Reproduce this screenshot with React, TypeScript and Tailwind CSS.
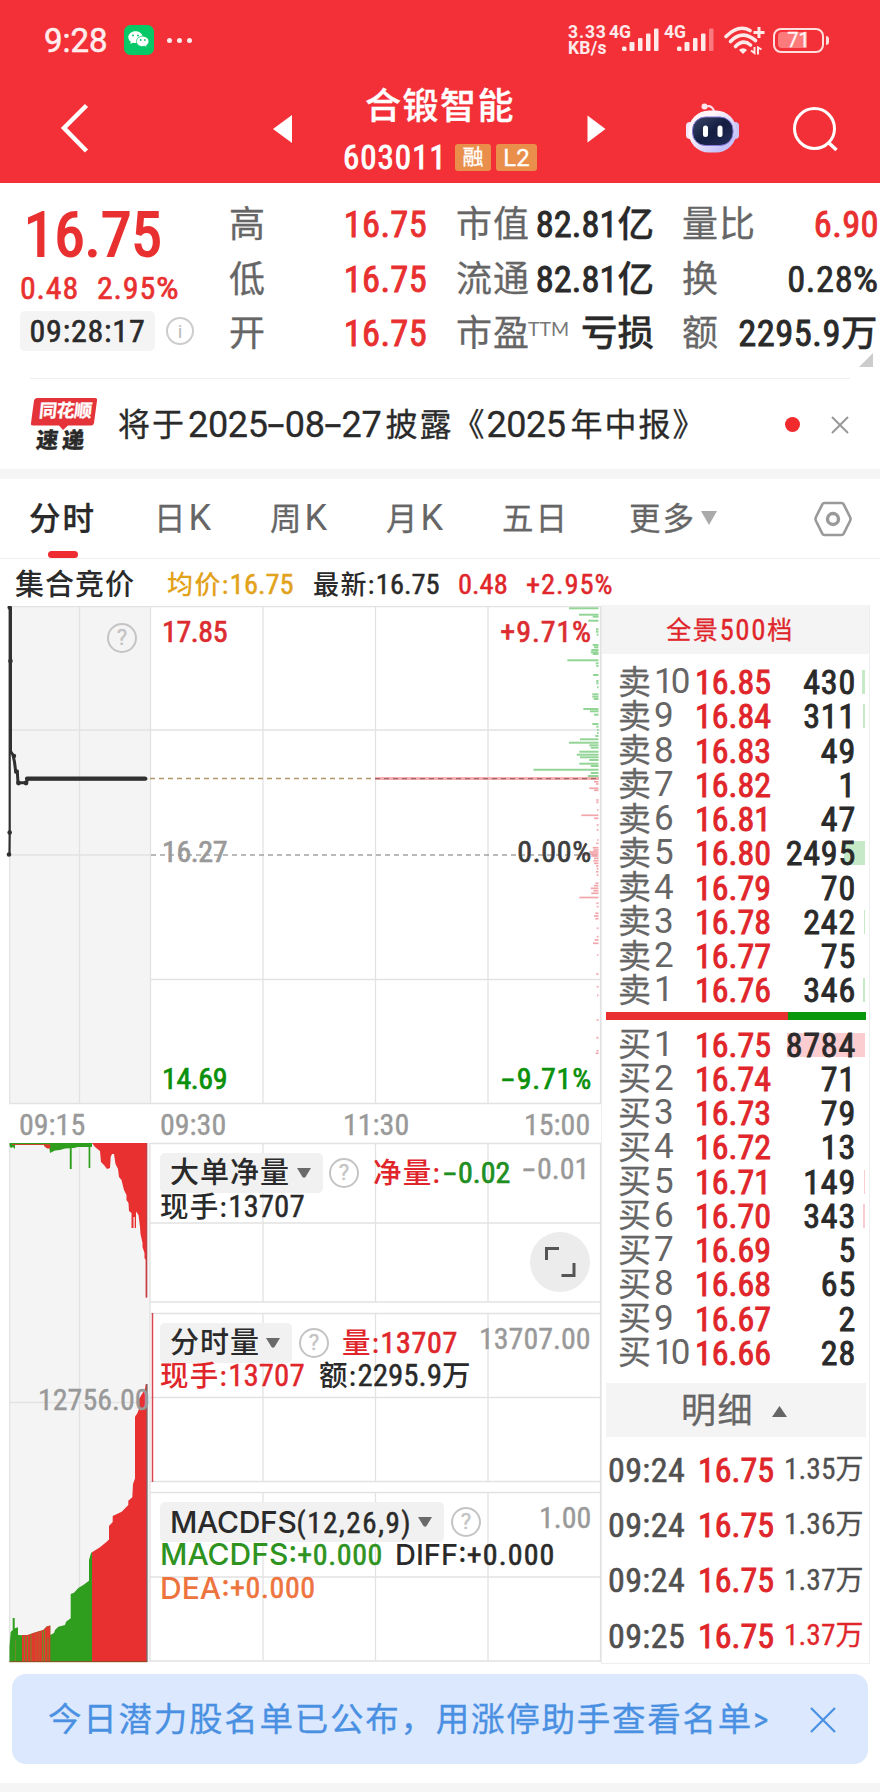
import type { ReactNode } from "react";

const GREEN_DEPTH: [number, number][] = [
  [608.3, 569], [614.7, 579], [616.7, 592.7], [620.7, 588.3], [629.3, 596], [631.7, 596], [634.7, 596.7], [645, 592.7],
  [647.3, 594], [650, 591.3], [652.3, 590.7], [654, 592.7], [660.3, 567.3], [663.3, 595.7], [666, 596.3], [675, 593],
  [681, 596.3], [683.3, 596.3], [687.3, 597], [694.3, 592.3], [696.7, 592.3], [699, 593.7], [709, 583.3], [711.3, 590],
  [714.7, 594], [724, 592.3], [726.7, 596.3], [730, 597], [733, 597], [736, 595.3], [739.3, 580], [742.7, 569],
  [745.3, 589.3], [747.7, 590.7], [751.7, 579.3], [754.7, 576.7], [757.3, 580], [760, 589.3], [763.7, 579.3],
  [766, 590.7], [769.7, 533.5], [773, 590.7], [776, 587.7],
];
const RED_DEPTH: [number, number][] = [
  [781.7, 594], [784, 596], [788.3, 589.3], [790.3, 594], [800, 596.3], [802.3, 596.3], [810, 597], [815.3, 581.3],
  [818.3, 594], [825, 596.7], [830, 596.7], [840, 597], [843.3, 596.3], [847.7, 592.7], [850, 593.3], [852, 589.3],
  [854, 581.3], [856, 591.3], [858.3, 594], [860.7, 593.3], [863.3, 594], [866, 596], [868.7, 596.7], [871.7, 596],
  [875, 596.7], [883.3, 595.3], [885.7, 594], [888.3, 590.7], [890.7, 593.3], [893.3, 591.3], [897.5, 579.3],
  [903.3, 596.3], [906.7, 596.7], [913.3, 595.3], [916, 594], [918.7, 595.3], [928.3, 596.7], [936.7, 596.7],
  [940, 594.7], [943.3, 593], [955, 597], [974, 596.3], [986.7, 596.7], [995.3, 597], [1020, 596.7], [1037.7, 596.3],
  [1050.7, 596.7], [1053.3, 595.7],
];

type Level = { label: string; price: string; volume: string; bar: number };
const SELLS: Level[] = [
  { label: "10", price: "16.85", volume: "430", bar: 3 },
  { label: "9", price: "16.84", volume: "311", bar: 2 },
  { label: "8", price: "16.83", volume: "49", bar: 0 },
  { label: "7", price: "16.82", volume: "1", bar: 0 },
  { label: "6", price: "16.81", volume: "47", bar: 0 },
  { label: "5", price: "16.80", volume: "2495", bar: 21 },
  { label: "4", price: "16.79", volume: "70", bar: 0 },
  { label: "3", price: "16.78", volume: "242", bar: 1 },
  { label: "2", price: "16.77", volume: "75", bar: 0 },
  { label: "1", price: "16.76", volume: "346", bar: 2 },
];
const BUYS: Level[] = [
  { label: "1", price: "16.75", volume: "8784", bar: 78 },
  { label: "2", price: "16.74", volume: "71", bar: 0 },
  { label: "3", price: "16.73", volume: "79", bar: 0 },
  { label: "4", price: "16.72", volume: "13", bar: 0 },
  { label: "5", price: "16.71", volume: "149", bar: 1 },
  { label: "6", price: "16.70", volume: "343", bar: 2 },
  { label: "7", price: "16.69", volume: "5", bar: 0 },
  { label: "8", price: "16.68", volume: "65", bar: 0 },
  { label: "9", price: "16.67", volume: "2", bar: 0 },
  { label: "10", price: "16.66", volume: "28", bar: 0 },
];
const TRADES = [
  { time: "09:24", volume: "1.35", up: false },
  { time: "09:24", volume: "1.36", up: false },
  { time: "09:24", volume: "1.37", up: false },
  { time: "09:25", volume: "1.37", up: true },
];

const STRONG = "[-webkit-text-stroke:0.9px]";

function Dash({ className = "w-[15px]" }: { className?: string }) {
  return (
    <span className={`inline-flex justify-center tracking-normal ${className}`}>
      <span className="inline-block scale-x-[1.7] font-normal">-</span>
    </span>
  );
}

function Signal({ dim = false }: { dim?: boolean }) {
  return (
    <svg className="h-[24px] w-[37px]" viewBox="0 0 37 24" fill="#ffeaea">
      <rect x="0" y="18.5" width="4.5" height="4.5" rx="1.5" />
      <rect x="7.5" y="14" width="5" height="9" rx="1" />
      <rect x="16" y="10" width="4.5" height="13" rx="1" />
      <rect x="24" y="5.5" width="4.5" height="17.5" rx="1" />
      <rect x="32" y="0.5" width="4.5" height="22.5" rx="1" opacity={dim ? 0.4 : 1} />
    </svg>
  );
}

function StatusBar() {
  return (
    <div className="flex h-[80px] items-center leading-none text-white/90">
      <span className="ml-[44px] w-[80px] font-['Roboto'] text-[33px] [-webkit-text-stroke:0.500px]">9:28</span>
      <svg className="h-[30px] w-[30px]" viewBox="0 0 30 30">
        <rect width="30" height="30" rx="6.5" fill="#07c866" />
        <path d="M11.5 6.2c-4 0-7.200 2.700-7.200 6 0 1.900 1 3.500 2.600 4.600l-.7 2.200 2.600-1.300c.9.300 1.800.400 2.700.400 4 0 7.200-2.600 7.200-5.900s-3.200-6-7.200-6z" fill="#fff" />
        <circle cx="9" cy="10.500" r="1" fill="#07c866" />
        <circle cx="14" cy="10.500" r="1" fill="#07c866" />
        <path d="M18.700 11.200c-3.500 0-6.200 2.300-6.200 5.200s2.700 5.200 6.200 5.200c.7 0 1.500-.1 2.100-.3l2.200 1.200-.6-2c1.500-1 2.500-2.400 2.500-4.100 0-2.900-2.800-5.200-6.200-5.200z" fill="#fff" stroke="#07c866" strokeWidth="0.800" />
        <circle cx="16.700" cy="15" r="0.900" fill="#07c866" />
        <circle cx="20.900" cy="15" r="0.900" fill="#07c866" />
      </svg>
      <div className="ml-[13px] flex gap-[5px]">
        <i className="size-[5px] rounded-full bg-white/90" />
        <i className="size-[5px] rounded-full bg-white/90" />
        <i className="size-[5px] rounded-full bg-white/90" />
      </div>
      <div className="ml-[376px] flex w-[41px] flex-col font-['Roboto'] text-[17.500px] leading-[16px] font-bold [-webkit-text-stroke:0px]">
        <span className="tracking-[0.900px]">3.33</span>
        <span className="tracking-[0.200px]">KB/s</span>
      </div>
      <span className="w-[13px] pb-[14px] font-['Roboto'] text-[17.500px] font-bold [-webkit-text-stroke:0px]">4G</span>
      <Signal />
      <span className="ml-[5px] w-[13px] pb-[14px] font-['Roboto'] text-[17.500px] font-bold [-webkit-text-stroke:0px]">4G</span>
      <Signal dim />
      <svg className="ml-[10px] h-[30px] w-[42px]" viewBox="0 0 42 30" fill="none" stroke="#ffeaea">
        <path d="M2 11.500Q14.500 -1 26 5.500" strokeWidth="3.600" strokeLinecap="round" />
        <path d="M6.500 16.500Q18 4.500 31.500 15.500" strokeWidth="3.600" strokeLinecap="round" />
        <path d="M11.500 21.500Q19 13.500 26.500 20" strokeWidth="3.600" strokeLinecap="round" />
        <path d="M15 25a5.500 5.500 0 0 1 8 0l-4 4z" fill="#ffeaea" stroke="none" />
        <path d="M35 2v11M29.500 7.500h11" strokeWidth="3" />
        <path d="M27 25.500l3.500 2.500v-6M37.500 24.500l-3.500-2v7" strokeWidth="2" />
      </svg>
      <div className="ml-[7px] flex h-[25px] w-[51px] items-center justify-center rounded-[8px] border-[2.500px] border-[#ffdede] p-[2.500px]">
        <div className="flex h-full w-full items-center justify-center rounded-[4px] bg-linear-to-r from-[#fb7a7c] from-70% to-transparent to-70% font-['Roboto'] text-[20px] leading-none">71</div>
      </div>
      <div className="ml-[2px] h-[9px] w-[3px] rounded-r bg-[#ffdede]" />
    </div>
  );
}

function Robot() {
  return (
    <svg className="h-[50px] w-[56px]" viewBox="0 0 56 50">
      <defs>
        <linearGradient id="shell" x1="0" y1="0" x2="1" y2="1">
          <stop offset="0.300" stopColor="#fff5fb" />
          <stop offset="0.800" stopColor="#c5c2fa" />
        </linearGradient>
        <linearGradient id="face" x1="0" y1="0" x2="1" y2="1">
          <stop offset="0" stopColor="#3a4567" />
          <stop offset="0.500" stopColor="#141e42" />
          <stop offset="1" stopColor="#222c58" />
        </linearGradient>
      </defs>
      <path d="M21 3.500q6-1.500 8 4.500" fill="none" stroke="#fbd9e6" strokeWidth="2.200" />
      <circle cx="19.500" cy="3.500" r="3" fill="#ffe6ee" />
      <rect x="1" y="19" width="8" height="17" rx="4" fill="#f3e6fb" />
      <rect x="46" y="19" width="8" height="17" rx="4" fill="#c9c4f6" />
      <rect x="3.500" y="7.500" width="48" height="42" rx="20.500" fill="url(#shell)" />
      <rect x="7.500" y="14" width="40.500" height="28.500" rx="13" fill="url(#face)" stroke="#8578d8" strokeWidth="1" />
      <rect x="18" y="22.500" width="5" height="11.500" rx="2.500" fill="#fff" />
      <rect x="32.500" y="22.500" width="5" height="11.500" rx="2.500" fill="#fff" />
    </svg>
  );
}

function TitleBar() {
  return (
    <div className="flex h-[103px]">
      <svg className="mt-[23px] ml-[59px] h-[50px] w-[30px]" viewBox="0 0 30 50" fill="none" stroke="#fff" strokeWidth="4.500">
        <path d="M27.500 2.500L5 25L27.500 48" />
      </svg>
      <svg className="mt-[35px] ml-[184px] h-[28px] w-[20px]" viewBox="0 0 20 28" fill="#fff">
        <path d="M0 14L19 0V28z" />
      </svg>
      <div className="ml-[50px] w-[202px] leading-none">
        <div className="mt-[9px] ml-[22px] text-[36px] font-medium tracking-[1.500px] text-white">合锻智能</div>
        <div className="mt-[16px] flex items-center">
          <span className={`w-[112px] text-[33px] tracking-[1px] text-white ${STRONG}`}>603011</span>
          <span className="flex h-[27px] w-[36px] items-center justify-center rounded-[3px] bg-[#e98f4b] text-[21px] text-white">融</span>
          <span className="ml-[5px] flex h-[27px] w-[41px] items-center justify-center rounded-[3px] bg-[#e98f4b] font-['Roboto'] text-[24px] text-white">L2</span>
        </div>
      </div>
      <svg className="mt-[35px] ml-[42px] h-[28px] w-[19px]" viewBox="0 0 19 28" fill="#fff">
        <path d="M18.500 14L0.500 0.500V27.500z" />
      </svg>
      <div className="mt-[23px] ml-[79px]">
        <Robot />
      </div>
      <svg className="mt-[26px] ml-[52px] h-[46px] w-[46px]" viewBox="0 0 46 46" fill="none" stroke="#fff">
        <circle cx="21.500" cy="22.500" r="20" strokeWidth="3" />
        <path d="M35.500 36.500L43.500 44" strokeWidth="3.500" />
      </svg>
    </div>
  );
}

function QuoteRow({ children }: { children: ReactNode }) {
  return <div className="flex h-[54.500px] items-center text-[36.500px] leading-none whitespace-nowrap">{children}</div>;
}

function Quote() {
  const label = "text-[36px] text-[#666] tracking-[1px]";
  const red = `w-[121px] text-right tracking-[0.300px] text-[#e93030] ${STRONG}`;
  const dark = `text-right text-[#2a2a2a] ${STRONG}`;
  const unit = "font-medium [-webkit-text-stroke:0.300px]";
  return (
    <div className="flex h-[195px]">
      <div className="w-[229px] leading-none text-[#e93030]">
        <div className="mt-[21px] ml-[24px] text-[62px] tracking-[-0.300px] [-webkit-text-stroke:1.800px]">16.75</div>
        <div className="mt-[6px] ml-[20px] flex text-[32px] tracking-[0.800px] [-webkit-text-stroke:0.600px]">
          <span className="w-[77px]">0.48</span>
          <span>2.95<span className="inline-block origin-left scale-x-[1.120]">%</span></span>
        </div>
        <div className="mt-[7px] flex items-center">
          <span className="ml-[20px] flex h-[40px] w-[135px] items-center justify-center rounded-[5px] bg-[#f4f4f4] text-[32px] tracking-[0.800px] text-[#2a2a2a] [-webkit-text-stroke:0.600px]">09:28:17</span>
          <span className="ml-[11px] flex size-[28px] items-center justify-center rounded-full border-2 border-[#ccc] font-['Roboto'] text-[19px] text-[#bbb] [-webkit-text-stroke:0px]">i</span>
        </div>
      </div>
      <div className="mt-[15px] w-[651px]">
        <QuoteRow>
          <span className={`w-[77px] ${label}`}>高</span><span className={red}>16.75</span>
          <span className={`ml-[29px] w-[78px] ${label}`}>市值</span>
          <span className={`w-[120px] ${dark}`}>82.81<span className={unit}>亿</span></span>
          <span className={`ml-[28px] ${label}`}>量比</span>
          <span className={`flex-1 pr-[1px] text-right tracking-[0.400px] text-[#e93030] ${STRONG}`}>6.90</span>
        </QuoteRow>
        <QuoteRow>
          <span className={`w-[77px] ${label}`}>低</span><span className={red}>16.75</span>
          <span className={`ml-[29px] w-[78px] ${label}`}>流通</span>
          <span className={`w-[120px] ${dark}`}>82.81<span className={unit}>亿</span></span>
          <span className={`ml-[28px] ${label}`}>换</span>
          <span className="flex-1 pr-[1px] text-right tracking-[0.600px] text-[#2a2a2a] [-webkit-text-stroke:0.700px]">0.28<span className="inline-block origin-right scale-x-[1.100] pl-[2px]">%</span></span>
        </QuoteRow>
        <QuoteRow>
          <span className={`w-[77px] ${label}`}>开</span><span className={red}>16.75</span>
          <span className={`ml-[29px] w-[72px] ${label}`}>市盈</span>
          <span className="w-[40px] pb-[12px] font-['Lato'] text-[19.500px] text-[#777] [-webkit-text-stroke:0px]">TTM</span>
          <span className="w-[86px] text-right font-medium text-[#2a2a2a]">亏损</span>
          <span className={`ml-[28px] ${label}`}>额</span>
          <span className={`flex-1 pr-[2px] tracking-[0.500px] ${dark}`}>2295.9<span className={unit}>万</span></span>
        </QuoteRow>
        <svg className="-mt-[9px] ml-[630px] h-[14px] w-[14px]" viewBox="0 0 14 14" fill="#ccc">
          <path d="M14 0V14H0z" />
        </svg>
      </div>
    </div>
  );
}

function News() {
  return (
    <div className="ml-[30px] flex h-[91px] w-[820px] items-center border-t-[1.500px] border-[#eee] pt-[1px] leading-none whitespace-nowrap text-[#2a2a2a]">
      <div className="relative h-[56px] w-[68px] shrink-0">
        <svg className="absolute inset-0 h-[56px] w-[68px]" viewBox="0 0 68 56" fill="#e5333a">
          <path d="M7 1H65q2.500 0 2 2.500L64 26q-.5 2.500-3 2.500H38l-5 4.500-4-4.500H3q-2.500 0-2-2.500L4 3.500Q4.500 1 7 1z" />
        </svg>
        <div className="relative flex -skew-x-6 flex-col items-center">
          <span className="mt-[5px] text-[18px] font-bold tracking-[-0.500px] text-white">同花顺</span>
          <span className="mt-[10px] text-[22px] font-black tracking-[4px]">速递</span>
        </div>
      </div>
      <div className="ml-[20px] flex w-[630px] shrink-0 items-center text-[32px] tracking-[2px]">
        <span className="w-[70px]">将于</span>
        <span className="font-['Roboto'] text-[36px] tracking-[-0.300px]">
          2025<Dash className="w-[17px]" />08<Dash className="w-[17px]" />27
        </span>
        <span className="ml-[4px] w-[67px]">披露</span>
        <span className="w-[34px]">《</span>
        <span className="font-['Roboto'] text-[36px] tracking-[-0.500px]">2025</span>
        <span className="ml-[5px]">年中报》</span>
      </div>
      <span className="ml-[37px] size-[15px] shrink-0 rounded-full bg-[#f02a2d]" />
      <svg className="ml-[31px] h-[18px] w-[18px] shrink-0" viewBox="0 0 18 18" stroke="#999" strokeWidth="2">
        <path d="M1 1L17 17M17 1L1 17" />
      </svg>
    </div>
  );
}

function TabK({ children }: { children: string }) {
  return (
    <span className="mt-[25px] w-[116px]">
      {children}
      <span className="ml-[1px] font-['Roboto'] text-[36px] leading-[0] [-webkit-text-stroke:0px]">K</span>
    </span>
  );
}

function Tabs() {
  return (
    <div className="flex h-[80px] border-b-[1.500px] border-[#eee] text-[31.500px] leading-none tracking-[2px] whitespace-nowrap text-[#666]">
      <div className="ml-[30px] flex w-[65px] flex-col items-center">
        <span className="mt-[25px] font-medium text-[#2a2a2a]">分时</span>
        <i className="mt-[15px] h-[7px] w-[30px] rounded-full bg-[#ed2b30]" />
      </div>
      <span className="w-[59px]" />
      <TabK>日</TabK>
      <TabK>周</TabK>
      <TabK>月</TabK>
      <span className="mt-[25px] w-[127px]">五日</span>
      <span className="mt-[25px] w-[72px]">更多</span>
      <svg className="mt-[32px] h-[14px] w-[16px]" viewBox="0 0 16 14" fill="#aaa"><path d="M0 0H16L8 14z" /></svg>
      <svg className="mt-[22px] ml-[97px] h-[36px] w-[38px]" viewBox="0 0 38 36" fill="none" stroke="#999">
        <path d="M10.500 2H27.500Q29 2 29.700 3.300L36 16Q37 18 36 20L29.700 32.700Q29 34 27.500 34H10.500Q9 34 8.300 32.700L2 20Q1 18 2 16L8.300 3.300Q9 2 10.500 2z" strokeWidth="2.600" />
        <circle cx="19" cy="18" r="5.500" strokeWidth="3.400" />
      </svg>
    </div>
  );
}

function InfoLine() {
  return (
    <div className="flex h-[47px] items-center pt-[5px] text-[28.500px] leading-none whitespace-nowrap [-webkit-text-stroke:0.500px]">
      <span className="ml-[15px] w-[152px] text-[29px] font-medium tracking-[1px] text-[#2a2a2a] [-webkit-text-stroke:0px]">集合竞价</span>
      <span className="w-[146px] text-[#e2a21b]"><span className="text-[26px] font-medium tracking-[1.400px] [-webkit-text-stroke:0px]">均价:</span>16.75</span>
      <span className="w-[145px] text-[#2a2a2a]"><span className="text-[26px] font-medium tracking-[1.400px] [-webkit-text-stroke:0px]">最新:</span>16.75</span>
      <span className="w-[68px] text-[#e0262b]">0.48</span>
      <span className="tracking-[0.900px] text-[#e0262b]">+2.95%</span>
    </div>
  );
}

function ChartCanvas() {
  return (
    <svg className="absolute inset-0 h-[1058px] w-[602px]" viewBox="0 606 602 1058" fill="none">
      <rect x="9" y="606" width="141" height="498" fill="#f4f4f4" />
      <rect x="9" y="1143" width="141" height="519" fill="#f4f4f4" />
      <g stroke="#e2e2e2" strokeWidth="1.300">
        <path d="M9 606.500H601M9 730H601M9 855H150M151 979.500H601M9 1103.500H601" />
        <path d="M9.700 606V1103M79.500 606V1103M150.500 606V1103M263 606V1103M375.500 606V1103M488 606V1103M600.500 606V1103" />
        <path d="M150 1143.500H601M150 1223H601M150 1302H601M150 1313.500H601M150 1397.500H601M150 1481.500H601M150 1492.500H601M150 1577H601M150 1661H601M9 1402.500H150" />
        <path d="M9.700 1143V1662M79.500 1143V1662M150 1143V1662M263 1143V1302M375.500 1143V1302M488 1143V1302M600.500 1143V1662M263 1313V1481M375.500 1313V1481M488 1313V1481M263 1492V1661M375.500 1492V1661M488 1492V1661" />
      </g>
      <path d="M375 778.600H599" stroke="#f5aeb0" strokeWidth="3" />
      <path d="M150 778.600H375" stroke="#b09768" strokeWidth="1.500" strokeDasharray="5 4" />
      <path d="M375 778.600H600" stroke="#a06a6a" strokeWidth="1.200" strokeDasharray="5 4" />
      <path d="M151 855H600" stroke="#a3a3a3" strokeWidth="1.500" strokeDasharray="5 4" />
      {GREEN_DEPTH.map(([y, x]) => <path key={y} d={`M${x} ${y}H598.500`} stroke="#93d596" strokeWidth="2" />)}
      {RED_DEPTH.map(([y, x]) => <path key={y} d={`M${x} ${y}H598.500`} stroke="#f2a5ab" strokeWidth="1.700" />)}

      <path d="M9.700 607V832L9.500 854" stroke="#303030" strokeWidth="2.200" />
      <path d="M10.500 607V753" stroke="#303030" strokeWidth="3" />
      <path d="M11 752L13 755L14.500 762L15.700 771.500H17.300L18 782.700H26.500L27.500 778.700H146" stroke="#303030" strokeWidth="3" strokeLinecap="round" strokeLinejoin="round" />
      <path d="M27 778.700H145" stroke="#303030" strokeWidth="4.200" strokeLinecap="round" />
      <g fill="#303030">
        <circle cx="9.700" cy="607.500" r="2.200" /><circle cx="10.500" cy="661" r="2.300" /><circle cx="14" cy="756" r="2.200" />
        <circle cx="16.500" cy="771.700" r="2.400" /><circle cx="18.500" cy="783" r="2.400" /><circle cx="26" cy="783" r="2.400" />
        <circle cx="9.700" cy="832.500" r="2.300" /><circle cx="9" cy="854.500" r="2.300" />
      </g>

      <path d="M9.500 1143H92V1147H78L74 1148L65 1148.500L60 1150L55 1150.500L50 1153L49 1145H15V1149L13 1147L11 1148L9.500 1146zM69.800 1144H71.700V1169H69.800zM88.600 1144H90.300V1168H88.600z" fill="#2f9e1e" />
      <path d="M12 1144.500H50M44 1145.500h6v2.500h-3z" stroke="#c9452c" strokeWidth="1" fill="#e83030" />
      <path d="M92 1143H147V1297.500H145.600V1260L144.500 1258V1253L142.500 1247V1243L140.500 1234L140 1227L138.500 1215L136 1211.500V1228H134.700V1217H133.500V1228H131.500V1213L129 1211L128.500 1203L126.500 1200V1195L124 1190L121.500 1180L119 1177L118 1169L115.500 1164L114 1154H112L110.700 1157L110 1168L107 1169L104 1165L101 1162L100 1151L95 1147z" fill="#e83030" />
      <path d="M146.700 1143V1297.500" stroke="#b8434d" strokeWidth="1.200" />

      <path d="M9.500 1662V1646.700L10.700 1632L12.700 1630V1618H14.700V1628.300L18 1627.300V1635L27.300 1635.500L33.300 1633L43.300 1630L46.700 1626.500L50.300 1625.500V1635L54 1633L55 1630L58.300 1626.700L65 1625L66 1621.700L70.700 1618.300V1594L74 1592.700L78.300 1588L83.300 1585L89 1580.700V1560L91 1553L92 1552.300V1662z" fill="#2f9e1e" />
      <path d="M22 1662V1635H27.500L33.300 1633L43.300 1630L46.700 1626.500L50.300 1625.500V1662z" fill="#e03a2e" />
      <path d="M24.500 1635.500V1662M27.500 1636V1662M31 1634V1662M42.500 1631V1662M44.500 1630V1662M48 1638V1662M15.500 1640V1662" stroke="#6f8a26" strokeWidth="1" />
      <path d="M36 1632V1662M39 1632V1662" stroke="#c05a2e" strokeWidth="1" />
      <path d="M92 1662V1552.300L100 1547.300L106.700 1541.700L109 1539.500V1526L112.700 1522V1516L121.700 1511.700L128.300 1505V1500.700L132.300 1497.300L133 1484L135 1478.500V1416.700L137.300 1413.300L139.300 1408.300V1398.500L143.300 1391.700L145 1389L145.700 1384H147V1662z" fill="#e83030" />
      <path d="M147 1384V1662" stroke="#76696f" strokeWidth="1.300" />
      <path d="M9.500 1661.700H147" stroke="#8c4a20" strokeWidth="1" />
      <path d="M152.500 1313V1482" stroke="#d94550" strokeWidth="1.500" />
    </svg>
  );
}

function Help({ className = "" }: { className?: string }) {
  return (
    <span className={`flex size-[30px] shrink-0 items-center justify-center rounded-full border-2 border-[#c4c4c4] font-['Roboto'] text-[22px] leading-none text-[#c4c4c4] ${className}`}>?</span>
  );
}

function Selector({ children, className }: { children: ReactNode; className: string }) {
  return (
    <span className={`flex h-[40px] shrink-0 items-center justify-between rounded-[5px] bg-[#f1f1f1] pr-[12px] pl-[10px] text-[29px] font-medium text-[#2a2a2a] [-webkit-text-stroke:0px] ${className}`}>
      {children}
      <svg className="h-[10px] w-[14px] shrink-0" viewBox="0 0 14 10" fill="#6a6a6a"><path d="M0 0H14L8.500 9Q7 10.500 5.500 9z" /></svg>
    </span>
  );
}

function Charts() {
  const cjk = "text-[28.500px] font-medium tracking-[1.300px] [-webkit-text-stroke:0px]";
  const latin = "font-['Inter'] font-medium [-webkit-text-stroke:0px]";
  return (
    <div className="relative h-[1058px] w-[601px] text-[30px] leading-none whitespace-nowrap [-webkit-text-stroke:0.400px]">
      <ChartCanvas />
      <div className="relative flex h-[497px]">
        <Help className="mt-[17px] ml-[107px]" />
        <div className="ml-[25px] flex w-[431px] flex-col [-webkit-text-stroke:0.700px]">
          <div className="mt-[11px] flex justify-between text-[#dc2c30]"><span className="tracking-[-0.400px]">17.85</span><span className="pr-[1px] tracking-[0.900px]">+9.71%</span></div>
          <div className="mt-[190px] flex justify-between text-[#999]"><span className="tracking-[-0.400px]">16.27</span><span className="pr-[1px] tracking-[0.700px] text-[#3d3d3d]">0.00%</span></div>
          <div className="mt-[197px] flex justify-between text-[#0a900a]"><span className="tracking-[-0.400px]">14.69</span><span className="pr-[1px] tracking-[0.800px]"><Dash className="w-[18px]" />9.71%</span></div>
        </div>
      </div>
      <div className="relative flex h-[40px] items-center pt-[3px] text-[#999]">
        <span className="ml-[19px] w-[141px]">09:15</span>
        <span className="w-[183px]">09:30</span>
        <span className="w-[181px]">11:30</span>
        <span>15:00</span>
      </div>

      <div className="relative ml-[160px] h-[170px]">
        <div className="flex items-center pt-[10px]">
          <Selector className="w-[163px] tracking-[1px]">大单净量</Selector>
          <Help className="ml-[6px]" />
          <span className="ml-[14px] w-[69px] text-[#e0262b]"><span className={cjk}>净量:</span></span>
          <span className="w-[79px] text-[#1f8f1f] [-webkit-text-stroke:0.700px]"><Dash className="w-[16px]" />0.02</span>
          <span className="pb-[9px] text-[#999]"><Dash className="w-[16px]" />0.01</span>
        </div>
        <div className="-mt-[2px] text-[31px] text-[#2a2a2a]"><span className={cjk}>现手:</span>13707</div>
        <span className="mt-[9px] ml-[370px] flex size-[60px] items-center justify-center rounded-full bg-[#ececec]">
          <svg className="h-[32px] w-[32px]" viewBox="0 0 32 32" fill="none" stroke="#555" strokeWidth="3">
            <path d="M2.500 14V2.500H15M17.500 29.500H30V17" />
          </svg>
        </span>
      </div>

      <div className="relative ml-[160px] h-[179px]">
        <div className="flex items-center pt-[10px]">
          <Selector className="w-[132px] tracking-[1px]">分时量</Selector>
          <Help className="ml-[7px]" />
          <span className="ml-[13px] w-[137px] text-[#e0262b] [-webkit-text-stroke:0.700px]"><span className={cjk}>量:</span><span className="tracking-[0.700px]">13707</span></span>
          <span className="pb-[9px] text-[#999]">13707.00</span>
        </div>
        <div className="-mt-[3px] flex text-[31px]">
          <span className="w-[159px] text-[#e0262b]"><span className={cjk}>现手:</span>13707</span>
          <span className="text-[#2a2a2a]"><span className={cjk}>额:</span>2295.9<span className={cjk}>万</span></span>
        </div>
        <span className="absolute top-[72px] -left-[122px] text-[30px] text-[#999]">12756.00</span>
      </div>

      <div className="relative ml-[160px]">
        <div className="flex items-center pt-[10px]">
          <Selector className="w-[284px]"><span className="font-normal"><span className="font-['Inter'] text-[30px] font-medium tracking-[-0.300px]">MACDFS</span><span className="tracking-[1.600px] [-webkit-text-stroke:0.500px]">(12,26,9)</span></span></Selector>
          <Help className="ml-[7px]" />
          <span className="ml-[58px] pb-[9px] text-[#999]">1.00</span>
        </div>
        <div className="-mt-[4px] flex h-[33px] items-center text-[30px] [-webkit-text-stroke:0.600px]">
          <span className="w-[235px] text-[#2f931f]"><span className={latin}>MACDFS:</span><span className="tracking-[0.600px]">+0.000</span></span>
          <span className="text-[#2a2a2a]"><span className={`text-[29px] ${latin}`}>DIFF:</span><span className="tracking-[1.100px]">+0.000</span></span>
        </div>
        <div className="flex h-[33px] items-center text-[30px] text-[#ee743f] [-webkit-text-stroke:0.600px]"><span className={latin}>DEA:</span><span className="tracking-[0.600px]">+0.000</span></div>
      </div>
    </div>
  );
}

function Book({ side, levels, tone }: { side: string; levels: Level[]; tone: string }) {
  return (
    <>
      {levels.map((l) => (
        <div key={l.label} className="relative flex h-[34.250px] items-center text-[34px] leading-none whitespace-nowrap">
          {l.bar > 0 && <i className={`absolute top-[5px] right-[4px] h-[24px] ${tone}`} style={{ width: l.bar }} />}
          <span className="relative ml-[16px] w-[36px] text-[33px] text-[#666]">{side}</span>
          <span className="relative w-[41px] pb-[1px] font-['Roboto'] text-[35px] tracking-[-3px] text-[#666] [-webkit-text-stroke:0px]">{l.label}</span>
          <span className={`relative w-[78px] text-[#e0262b] ${STRONG}`}>{l.price}</span>
          <span className={`relative flex-1 pr-[13px] text-right tracking-[0.800px] text-[#2a2a2a] ${STRONG}`}>{l.volume}</span>
        </div>
      ))}
    </>
  );
}

function SidePanel() {
  return (
    <div className="-mt-[1px] h-[1059px] w-[269px] border-[1.500px] border-t-0 border-[#eee] leading-none whitespace-nowrap">
      <div className="flex h-[49px] items-center justify-center bg-[#f4f4f4] pt-[1px] pr-[11px] text-[25px] tracking-[1.600px] text-[#e0262b]">
        全景<span className="text-[29px]">500</span>档
      </div>
      <div className="pt-[11px]">
        <Book side="卖" levels={SELLS} tone="bg-[#c6e9c8]" />
      </div>
      <div className="mt-[4px] ml-[4px] flex h-[8px]">
        <i className="w-[182px] bg-[#e93030]" />
        <i className="w-[78px] bg-[#0a980a]" />
      </div>
      <div className="pt-[8px]">
        <Book side="买" levels={BUYS} tone="bg-[#fbcdd1]" />
      </div>
      <div className="mt-[13px] ml-[4px] flex h-[54px] w-[260px] items-center bg-[#f4f4f4] pt-[3px] text-[35px] tracking-[1.500px] text-[#666]">
        <span className="ml-[75px] w-[91px]">明细</span>
        <svg className="h-[11px] w-[15px]" viewBox="0 0 15 11" fill="#666"><path d="M7.500 0L15 11H0z" /></svg>
      </div>
      <div className="pt-[5px]">
        {TRADES.map((t, i) => (
          <div key={i} className="flex h-[55.400px] items-center pl-[6px] text-[34px]">
            <span className="w-[90px] tracking-[0.400px] text-[#505050] [-webkit-text-stroke:0.600px]">{t.time}</span>
            <span className={`w-[86px] text-[#e0262b] ${STRONG}`}>16.75</span>
            <span className={t.up ? "text-[29.500px] text-[#e0262b]" : "text-[29.500px] text-[#505050]"}>{t.volume}<span className="text-[28px]">万</span></span>
          </div>
        ))}
      </div>
    </div>
  );
}

export default function App() {
  return (
    <div className="h-[1792px] w-[880px] overflow-hidden bg-white font-['Roboto_Condensed','Noto_Sans_CJK_SC',sans-serif] text-[#2a2a2a] [-webkit-text-stroke:0.300px]">
      <header className="h-[183px] bg-[#f33037]">
        <StatusBar />
        <TitleBar />
      </header>
      <Quote />
      <News />
      <div className="h-[10px] bg-[#f5f5f5]" />
      <Tabs />
      <InfoLine />
      <main className="flex h-[1058px]">
        <Charts />
        <SidePanel />
      </main>
      <div className="mt-[10px] ml-[12px] flex h-[90px] w-[856px] items-center rounded-[14px] bg-[#dbe8fd] pt-[1px] pl-[36px] text-[33.500px] leading-none tracking-[1.750px] whitespace-nowrap text-[#4a90e2]">
        <span className="w-[762px]">今日潜力股名单已公布，用涨停助手查看名单&gt;</span>
        <svg className="h-[26px] w-[26px]" viewBox="0 0 26 26" stroke="#4a90e2" strokeWidth="2.200"><path d="M1 1L25 25M25 1L1 25" /></svg>
      </div>
      <div className="mt-[19px] h-[10px] bg-[#f5f5f5]" />
    </div>
  );
}
